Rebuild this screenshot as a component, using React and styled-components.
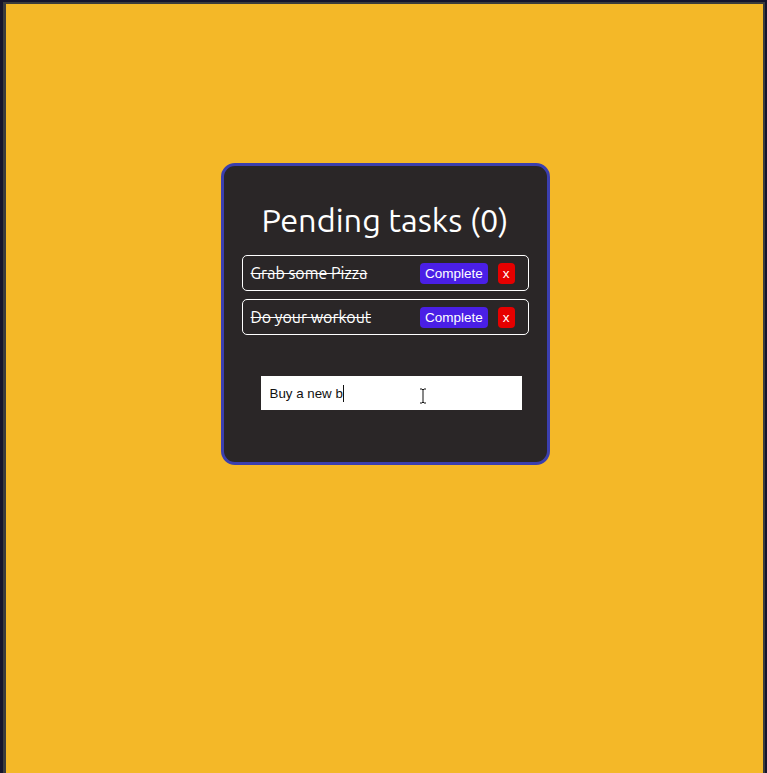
import React, { useState } from "react";
import styled, { createGlobalStyle } from "styled-components";

const GlobalStyle = createGlobalStyle`
  html, body {
    margin: 0;
    padding: 0;
    height: 100%;
    background: #15152c;
  }
  #root {
    height: 100%;
  }
  * {
    box-sizing: border-box;
  }
`;

const Frame = styled.div`
  height: 773px;
  padding: 2px 2px 0 3px;
`;

const Page = styled.div`
  height: 100%;
  border: 2px solid #3c3c3c;
  border-left-width: 3px;
  border-bottom: none;
  background: #f4b828;
  display: flex;
  justify-content: center;
  padding-top: 159px;
  padding-left: 1px;
`;

const Card = styled.div`
  width: 329px;
  height: 302px;
  background: #2a2627;
  border: 3px solid #3b3fae;
  border-radius: 14px;
  padding: 34px 18px 0;
  display: flex;
  flex-direction: column;
  align-items: center;
`;

const Title = styled.h1`
  margin: 0 0 15px;
  font-family: Ubuntu, "Noto Sans", "Open Sans", sans-serif;
  font-weight: 400;
  font-size: 32.5px;
  line-height: 40px;
  color: #ffffff;
`;

const List = styled.ul`
  list-style: none;
  margin: 0;
  padding: 0;
  width: 100%;
  display: flex;
  flex-direction: column;
  gap: 8px;
`;

const Task = styled.li`
  height: 36px;
  border: 1px solid #ffffff;
  border-radius: 5px;
  display: flex;
  align-items: center;
  padding: 0 13px 0 8px;
`;

const TaskText = styled.span`
  flex: 1;
  font-family: Ubuntu, "Noto Sans", "Open Sans", sans-serif;
  font-size: 16px;
  color: #ffffff;
  text-decoration: ${(p) => (p.$done ? "line-through" : "none")};
`;

const Button = styled.button`
  border: none;
  border-radius: 4px;
  height: 21px;
  padding: 0 5px;
  margin-left: ${(p) => (p.$small ? "10px" : "0")};
  background: ${(p) => p.$bg};
  color: #ffffff;
  font-family: "Liberation Sans", Arial, sans-serif;
  font-size: 13.5px;
  line-height: 21px;
  cursor: pointer;
`;

const InputWrap = styled.div`
  position: relative;
  margin-top: 41px;
  margin-left: 12px;
  width: 261px;
`;

const Input = styled.input`
  width: 100%;
  height: 34px;
  border: none;
  outline: none;
  padding: 0 9px;
  background: #ffffff;
  font-family: "Liberation Sans", Arial, sans-serif;
  font-size: 13.333px;
  color: #111111;
`;

const Caret = styled.span`
  position: absolute;
  left: 82px;
  top: 9px;
  width: 1px;
  height: 17px;
  background: #111111;
`;

const Cursor = styled.svg`
  position: absolute;
  left: 158px;
  top: 12px;
`;

const tasks = [
  { id: 1, text: "Grab some Pizza", done: true },
  { id: 2, text: "Do your workout", done: true },
];

export default function App() {
  const [value, setValue] = useState("Buy a new b");
  const pending = tasks.filter((t) => !t.done).length;

  return (
    <>
      <GlobalStyle />
      <Frame>
        <Page>
          <Card>
            <Title>Pending tasks ({pending})</Title>
            <List>
              {tasks.map((t) => (
                <Task key={t.id}>
                  <TaskText $done={t.done}>{t.text}</TaskText>
                  <Button $bg="#4a1fe6">Complete</Button>
                  <Button $bg="#e60000" $small>
                    x
                  </Button>
                </Task>
              ))}
            </List>
            <InputWrap>
              <Input value={value} onChange={(e) => setValue(e.target.value)} />
              <Caret />
              <Cursor width="8" height="16" viewBox="0 0 8 16">
                <path
                  d="M1 1h2l1 1 1-1h2M4 2v12M1 15h2l1-1 1 1h2"
                  fill="none"
                  stroke="#ffffff"
                  strokeWidth="2.2"
                />
                <path
                  d="M1 1h2l1 1 1-1h2M4 2v12M1 15h2l1-1 1 1h2"
                  fill="none"
                  stroke="#111111"
                  strokeWidth="1"
                />
              </Cursor>
            </InputWrap>
          </Card>
        </Page>
      </Frame>
    </>
  );
}
